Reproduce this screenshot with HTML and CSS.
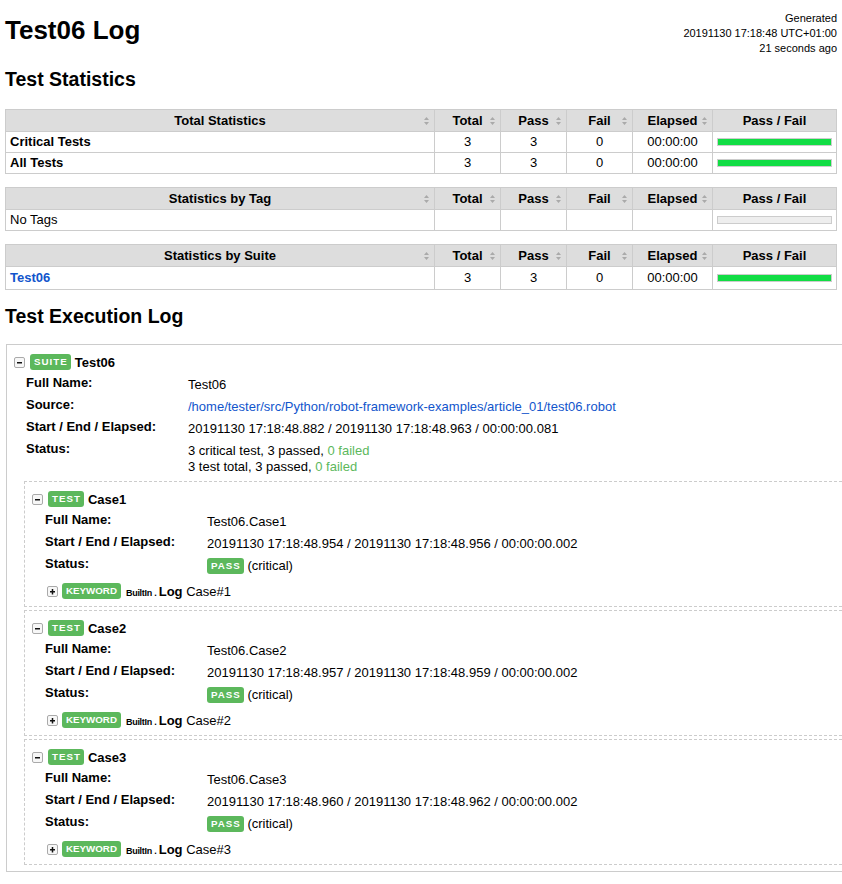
FILE: index.html
```html
<!DOCTYPE html>
<html>
<head>
<meta charset="utf-8">
<title>Test06 Log</title>
<link rel="stylesheet" href="styles.css">
</head>
<body>
<div class="header">
  <h1 class="title">Test06 Log</h1>
  <div class="generated">Generated<br>20191130 17:18:48 UTC+01:00<br>21 seconds ago</div>
</div>

<h2 class="section-title stats-title">Test Statistics</h2>

<table class="statistics">
  <colgroup><col><col class="c-stat"><col class="c-stat"><col class="c-stat"><col class="c-elapsed"><col class="c-graph"></colgroup>
  <thead>
    <tr>
      <th>Total Statistics<svg class="sort" width="5" height="8" viewBox="0 0 5 8"><path d="M2.5 0L5 3H0z M0 5H5L2.5 8z"/></svg></th>
      <th>Total<svg class="sort" width="5" height="8" viewBox="0 0 5 8"><path d="M2.5 0L5 3H0z M0 5H5L2.5 8z"/></svg></th>
      <th>Pass<svg class="sort" width="5" height="8" viewBox="0 0 5 8"><path d="M2.5 0L5 3H0z M0 5H5L2.5 8z"/></svg></th>
      <th>Fail<svg class="sort" width="5" height="8" viewBox="0 0 5 8"><path d="M2.5 0L5 3H0z M0 5H5L2.5 8z"/></svg></th>
      <th>Elapsed<svg class="sort" width="5" height="8" viewBox="0 0 5 8"><path d="M2.5 0L5 3H0z M0 5H5L2.5 8z"/></svg></th>
      <th>Pass / Fail</th>
    </tr>
  </thead>
  <tbody>
    <tr><td class="stat-name"><b>Critical Tests</b></td><td>3</td><td>3</td><td>0</td><td>00:00:00</td><td><div class="graph"><div class="pass-bar"></div></div></td></tr>
    <tr><td class="stat-name"><b>All Tests</b></td><td>3</td><td>3</td><td>0</td><td>00:00:00</td><td><div class="graph"><div class="pass-bar"></div></div></td></tr>
  </tbody>
</table>

<table class="statistics">
  <colgroup><col><col class="c-stat"><col class="c-stat"><col class="c-stat"><col class="c-elapsed"><col class="c-graph"></colgroup>
  <thead>
    <tr>
      <th>Statistics by Tag<svg class="sort" width="5" height="8" viewBox="0 0 5 8"><path d="M2.5 0L5 3H0z M0 5H5L2.5 8z"/></svg></th>
      <th>Total<svg class="sort" width="5" height="8" viewBox="0 0 5 8"><path d="M2.5 0L5 3H0z M0 5H5L2.5 8z"/></svg></th>
      <th>Pass<svg class="sort" width="5" height="8" viewBox="0 0 5 8"><path d="M2.5 0L5 3H0z M0 5H5L2.5 8z"/></svg></th>
      <th>Fail<svg class="sort" width="5" height="8" viewBox="0 0 5 8"><path d="M2.5 0L5 3H0z M0 5H5L2.5 8z"/></svg></th>
      <th>Elapsed<svg class="sort" width="5" height="8" viewBox="0 0 5 8"><path d="M2.5 0L5 3H0z M0 5H5L2.5 8z"/></svg></th>
      <th>Pass / Fail</th>
    </tr>
  </thead>
  <tbody>
    <tr><td class="stat-name">No Tags</td><td></td><td></td><td></td><td></td><td><div class="graph empty"></div></td></tr>
  </tbody>
</table>

<table class="statistics">
  <colgroup><col><col class="c-stat"><col class="c-stat"><col class="c-stat"><col class="c-elapsed"><col class="c-graph"></colgroup>
  <thead>
    <tr>
      <th>Statistics by Suite<svg class="sort" width="5" height="8" viewBox="0 0 5 8"><path d="M2.5 0L5 3H0z M0 5H5L2.5 8z"/></svg></th>
      <th>Total<svg class="sort" width="5" height="8" viewBox="0 0 5 8"><path d="M2.5 0L5 3H0z M0 5H5L2.5 8z"/></svg></th>
      <th>Pass<svg class="sort" width="5" height="8" viewBox="0 0 5 8"><path d="M2.5 0L5 3H0z M0 5H5L2.5 8z"/></svg></th>
      <th>Fail<svg class="sort" width="5" height="8" viewBox="0 0 5 8"><path d="M2.5 0L5 3H0z M0 5H5L2.5 8z"/></svg></th>
      <th>Elapsed<svg class="sort" width="5" height="8" viewBox="0 0 5 8"><path d="M2.5 0L5 3H0z M0 5H5L2.5 8z"/></svg></th>
      <th>Pass / Fail</th>
    </tr>
  </thead>
  <tbody>
    <tr class="tall"><td class="stat-name"><a href="#s1" class="link"><b>Test06</b></a></td><td>3</td><td>3</td><td>0</td><td>00:00:00</td><td><div class="graph"><div class="pass-bar"></div></div></td></tr>
  </tbody>
</table>

<h2 class="section-title log-title">Test Execution Log</h2>

<div class="suite" id="s1">
  <div class="element-header">
    <svg class="toggle" width="11" height="11" viewBox="0 0 11 11"><rect x="0.5" y="0.5" width="10" height="10" rx="1.5" fill="#f7f7f7" stroke="#aaa"/><rect x="3" y="5" width="5" height="1.5" fill="#111"/></svg>
    <span class="label">SUITE</span>
    <span class="name">Test06</span>
  </div>
  <table class="metadata suite-meta">
    <tr><th>Full Name:</th><td>Test06</td></tr>
    <tr><th>Source:</th><td><a class="link" href="#">/home/tester/src/Python/robot-framework-examples/article_01/test06.robot</a></td></tr>
    <tr><th>Start / End / Elapsed:</th><td>20191130 17:18:48.882 / 20191130 17:18:48.963 / 00:00:00.081</td></tr>
    <tr><th>Status:</th><td>3 critical test, 3 passed, <span class="pass-text">0 failed</span><br>3 test total, 3 passed, <span class="pass-text">0 failed</span></td></tr>
  </table>

  <div class="children">
    <div class="test">
      <div class="element-header">
        <svg class="toggle" width="11" height="11" viewBox="0 0 11 11"><rect x="0.5" y="0.5" width="10" height="10" rx="1.5" fill="#f7f7f7" stroke="#aaa"/><rect x="3" y="5" width="5" height="1.5" fill="#111"/></svg>
        <span class="label">TEST</span>
        <span class="name">Case1</span>
      </div>
      <table class="metadata test-meta">
        <tr><th>Full Name:</th><td>Test06.Case1</td></tr>
        <tr><th>Start / End / Elapsed:</th><td>20191130 17:18:48.954 / 20191130 17:18:48.956 / 00:00:00.002</td></tr>
        <tr><th>Status:</th><td><span class="label status">PASS</span> (critical)</td></tr>
      </table>
      <div class="keyword">
        <div class="element-header kw-header">
          <svg class="toggle" width="11" height="11" viewBox="0 0 11 11"><rect x="0.5" y="0.5" width="10" height="10" rx="1.5" fill="#f7f7f7" stroke="#aaa"/><rect x="3" y="5" width="5" height="1.5" fill="#111"/><rect x="4.75" y="3" width="1.5" height="5.5" fill="#111"/></svg>
          <span class="label kw">KEYWORD</span>
          <span class="kw-text"><span class="parent-name">BuiltIn . </span><b>Log</b> Case#1</span>
        </div>
      </div>
    </div>

    <div class="test">
      <div class="element-header">
        <svg class="toggle" width="11" height="11" viewBox="0 0 11 11"><rect x="0.5" y="0.5" width="10" height="10" rx="1.5" fill="#f7f7f7" stroke="#aaa"/><rect x="3" y="5" width="5" height="1.5" fill="#111"/></svg>
        <span class="label">TEST</span>
        <span class="name">Case2</span>
      </div>
      <table class="metadata test-meta">
        <tr><th>Full Name:</th><td>Test06.Case2</td></tr>
        <tr><th>Start / End / Elapsed:</th><td>20191130 17:18:48.957 / 20191130 17:18:48.959 / 00:00:00.002</td></tr>
        <tr><th>Status:</th><td><span class="label status">PASS</span> (critical)</td></tr>
      </table>
      <div class="keyword">
        <div class="element-header kw-header">
          <svg class="toggle" width="11" height="11" viewBox="0 0 11 11"><rect x="0.5" y="0.5" width="10" height="10" rx="1.5" fill="#f7f7f7" stroke="#aaa"/><rect x="3" y="5" width="5" height="1.5" fill="#111"/><rect x="4.75" y="3" width="1.5" height="5.5" fill="#111"/></svg>
          <span class="label kw">KEYWORD</span>
          <span class="kw-text"><span class="parent-name">BuiltIn . </span><b>Log</b> Case#2</span>
        </div>
      </div>
    </div>

    <div class="test">
      <div class="element-header">
        <svg class="toggle" width="11" height="11" viewBox="0 0 11 11"><rect x="0.5" y="0.5" width="10" height="10" rx="1.5" fill="#f7f7f7" stroke="#aaa"/><rect x="3" y="5" width="5" height="1.5" fill="#111"/></svg>
        <span class="label">TEST</span>
        <span class="name">Case3</span>
      </div>
      <table class="metadata test-meta">
        <tr><th>Full Name:</th><td>Test06.Case3</td></tr>
        <tr><th>Start / End / Elapsed:</th><td>20191130 17:18:48.960 / 20191130 17:18:48.962 / 00:00:00.002</td></tr>
        <tr><th>Status:</th><td><span class="label status">PASS</span> (critical)</td></tr>
      </table>
      <div class="keyword">
        <div class="element-header kw-header">
          <svg class="toggle" width="11" height="11" viewBox="0 0 11 11"><rect x="0.5" y="0.5" width="10" height="10" rx="1.5" fill="#f7f7f7" stroke="#aaa"/><rect x="3" y="5" width="5" height="1.5" fill="#111"/><rect x="4.75" y="3" width="1.5" height="5.5" fill="#111"/></svg>
          <span class="label kw">KEYWORD</span>
          <span class="kw-text"><span class="parent-name">BuiltIn . </span><b>Log</b> Case#3</span>
        </div>
      </div>
    </div>
  </div>
</div>
</body>
</html>
```

FILE: styles.css
```css
html {
  overflow: hidden;
}
body {
  margin: 0;
  padding: 0 0 0 5px;
  font-family: "Liberation Sans", Arial, Helvetica, sans-serif;
  font-size: 13px;
  color: #000;
  background: #fff;
}
.header {
  width: 832px;
  display: flex;
  justify-content: space-between;
  align-items: flex-start;
}
.title {
  margin: 15px 0 0;
  font-size: 26px;
  line-height: 30px;
  font-weight: bold;
}
.generated {
  margin-top: 11px;
  font-size: 11px;
  line-height: 15px;
  text-align: right;
  white-space: nowrap;
}
.section-title {
  font-size: 19.5px;
  line-height: 22px;
  font-weight: bold;
  margin: 0;
}
.stats-title {
  margin: 12px 0 19px;
}
.log-title {
  margin: 15px 0 17px;
}
a.link {
  color: #15c;
  text-decoration: none;
}

/* Statistics */
.statistics {
  width: 832px;
  table-layout: fixed;
  border-collapse: collapse;
  margin-bottom: 13px;
}
.statistics col.c-stat { width: 66px; }
.statistics col.c-elapsed { width: 80px; }
.statistics col.c-graph { width: 124px; }
.statistics th {
  position: relative;
  background: #ddd;
  border: 1px solid #ccc;
  padding: 3px 4px;
  line-height: 15px;
  font-weight: bold;
  text-align: center;
}
.statistics td {
  border: 1px solid #ccc;
  padding: 2px 4px;
  line-height: 16px;
  text-align: center;
  vertical-align: middle;
}
.statistics tr.tall td {
  padding: 3px 4px;
}
.statistics td.stat-name {
  text-align: left;
}
.sort {
  position: absolute;
  right: 5px;
  top: 50%;
  margin-top: -4px;
  fill: #aaa;
}
.graph {
  height: 8px;
  box-sizing: border-box;
  border: 1px solid #ccc;
  background: #f33;
}
.graph.empty {
  background: #eee;
}
.pass-bar {
  height: 100%;
  width: 100%;
  background: #1d4;
}

/* Execution log */
.suite {
  margin-left: 1px;
  width: 880px;
  border: 1px solid #ccc;
}
.element-header {
  display: flex;
  align-items: center;
  padding: 9px 0 3px 7px;
  height: 16px;
}
.toggle {
  flex: none;
  margin-right: 5px;
}
.label {
  display: inline-block;
  background: #5cb85c;
  color: #fff;
  font-size: 9.75px;
  font-weight: bold;
  letter-spacing: 1px;
  line-height: 16px;
  height: 16px;
  padding: 0 3px 0 4px;
  border-radius: 3px;
  margin-right: 4px;
}
.label.kw {
  letter-spacing: 0;
  padding: 0 4px;
  margin-right: 5px;
}
.label.status {
  vertical-align: top;
  margin-right: 0;
}
.name {
  font-weight: bold;
}
.metadata {
  border-collapse: collapse;
}
.suite-meta {
  margin-left: 19px;
}
.test-meta {
  margin-left: 20px;
}
.metadata th {
  width: 162px;
  padding: 2px 0 0;
  text-align: left;
  vertical-align: top;
  line-height: 16px;
  font-weight: bold;
}
.metadata td {
  padding: 4px 0 2px;
  vertical-align: top;
  line-height: 16px;
  white-space: nowrap;
}
.pass-text {
  color: #5cb85c;
}
.children {
  padding: 1px 0 6px 17px;
}
.test {
  margin-top: 3px;
  border: 1px dashed #ccc;
}
.keyword {
  margin-left: 15px;
}
.kw-header {
  padding: 7px 0 7px 7px;
}
.kw-header .toggle {
  margin-right: 4px;
}
.parent-name {
  font-size: 9px;
  font-weight: bold;
  letter-spacing: -0.03em;
}
.kw-text {
  white-space: nowrap;
}
```
